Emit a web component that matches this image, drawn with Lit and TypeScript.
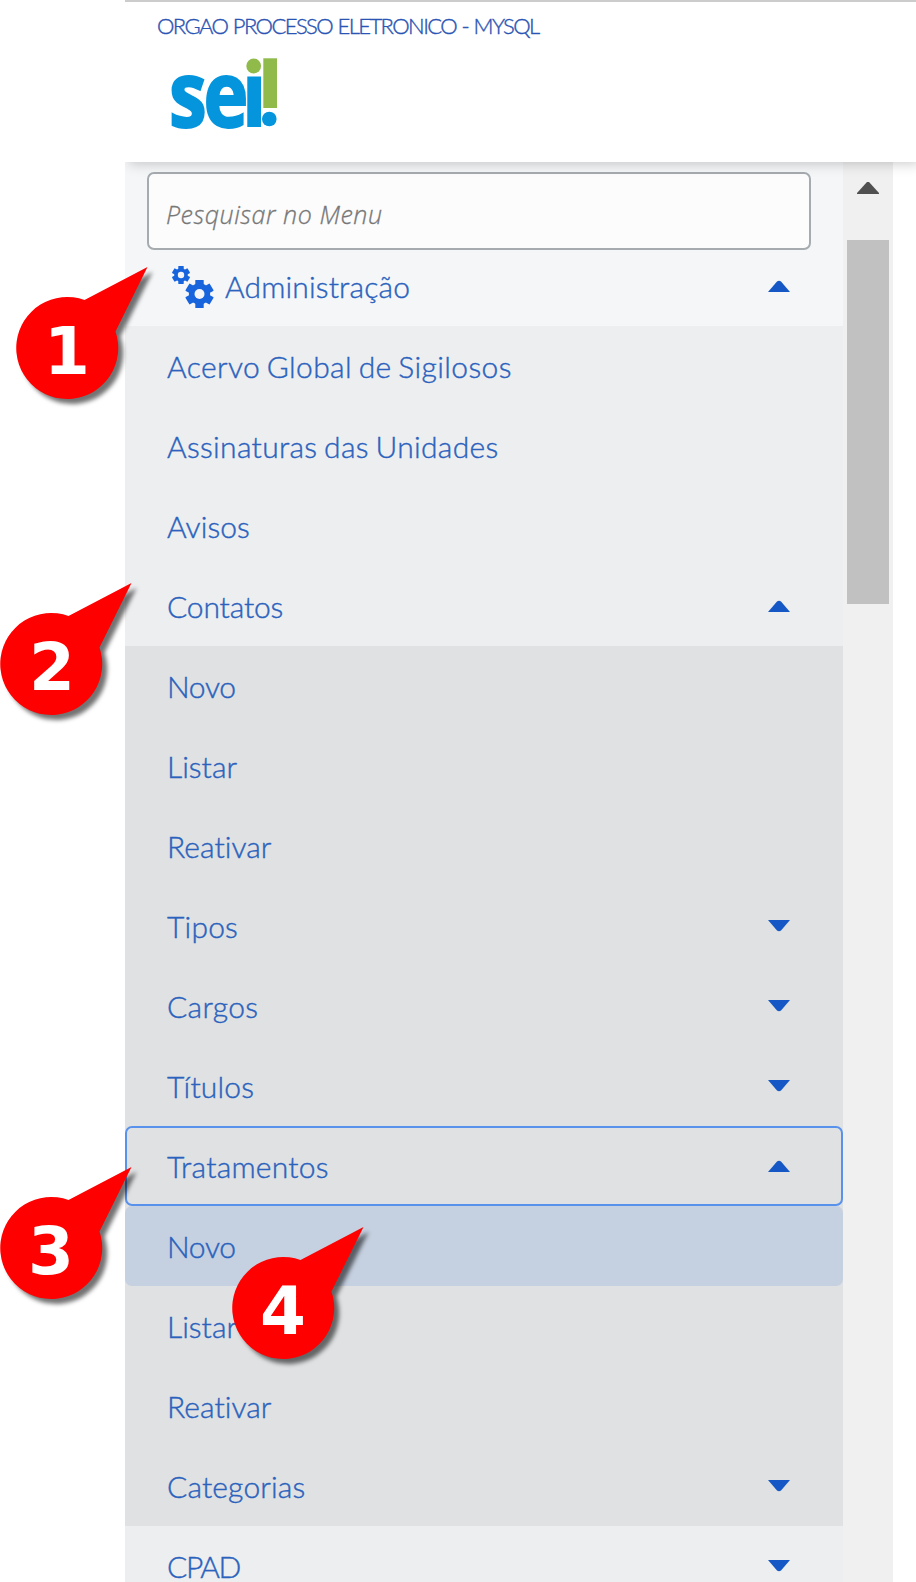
import { LitElement, html, svg, css, nothing } from "lit";
import { customElement } from "lit/decorators.js";
import { classMap } from "lit/directives/class-map.js";

type Arrow = "up" | "down";
interface Item {
  label: string;
  spacing: number;
  arrow?: Arrow;
  state?: "focused" | "selected";
}

const firstLevel: Item[] = [
  { label: "Acervo Global de Sigilosos", spacing: 0.38 },
  { label: "Assinaturas das Unidades", spacing: 0.31 },
  { label: "Avisos", spacing: 0.05 },
  { label: "Contatos", spacing: -0.15, arrow: "up" },
];

const secondLevel: Item[] = [
  { label: "Novo", spacing: -0.3 },
  { label: "Listar", spacing: 0 },
  { label: "Reativar", spacing: 0.05 },
  { label: "Tipos", spacing: 0.2, arrow: "down" },
  { label: "Cargos", spacing: 0.3, arrow: "down" },
  { label: "Títulos", spacing: 0.2, arrow: "down" },
  { label: "Tratamentos", spacing: 0.25, arrow: "up", state: "focused" },
  { label: "Novo", spacing: -0.3, state: "selected" },
  { label: "Listar", spacing: 0 },
  { label: "Reativar", spacing: 0.05 },
  { label: "Categorias", spacing: 0.15, arrow: "down" },
];

const callouts = [
  { digit: "1", left: 16, top: 267 },
  { digit: "2", left: 0, top: 583 },
  { digit: "3", left: 0, top: 1167 },
  { digit: "4", left: 232, top: 1227 },
];

const gear = (cx: number, cy: number, r: number, hole: number) => svg`
  <g transform="translate(${cx} ${cy})" fill="#1764dd">
    <circle r=${r * 0.76}></circle>
    ${[0, 60, 120, 180, 240, 300].map(
      (a) => svg`<rect x=${-r * 0.3} y=${-r} width=${r * 0.6} height=${r * 0.5} rx="0.6" transform="rotate(${a})"></rect>`
    )}
    <circle r=${hole} fill="#f3f5f8"></circle>
  </g>`;

@customElement("app-root")
export class AppRoot extends LitElement {
  static styles = css`
    :host {
      display: block;
      position: relative;
      width: 916px;
      height: 1582px;
      overflow: hidden;
      background: #fff;
      color: #2a62bd;
      font-family: Lato, "Open Sans", sans-serif;
    }
    .page {
      margin-left: 125px;
      display: flex;
      flex-direction: column;
      height: 100%;
    }
    header {
      box-sizing: border-box;
      flex: none;
      height: 162px;
      border-top: 2px solid #ccc;
      background: #fff;
      padding: 11px 0 0 32px;
      box-shadow: 4px 2px 12px rgba(0, 0, 0, 0.2);
      position: relative;
      clip-path: inset(0 0 -20px 0);
      z-index: 1;
    }
    .org {
      font-size: 22px;
      font-weight: 300;
      line-height: 26px;
      letter-spacing: -1.58px;
      word-spacing: 1px;
      white-space: nowrap;
      color: #2a55b4;
      -webkit-text-stroke: 0.4px #2a55b4;
    }
    .logo {
      display: block;
      overflow: visible;
      margin: 15px 0 0 10px;
    }
    .body {
      display: flex;
      flex: 1;
      min-height: 0;
    }
    nav {
      width: 718px;
      background: #f4f6f8;
    }
    .search {
      box-sizing: border-box;
      display: block;
      width: 664px;
      height: 78px;
      margin: 10px 0 0 22px;
      padding: 6px 17px 0;
      border: 2px solid #a6abb0;
      border-radius: 7px;
      background: #fcfcfc;
      font: italic 300 25px "Open Sans", sans-serif;
      letter-spacing: 0.55px;
      outline: none;
    }
    .search::placeholder {
      color: #777;
      opacity: 1;
      -webkit-text-stroke: 0.3px #777;
    }
    .row {
      box-sizing: border-box;
      display: flex;
      align-items: center;
      justify-content: space-between;
      height: 80px;
      padding: 0 52px 0 42px;
      font-size: 30px;
      font-weight: 300;
      line-height: 80px;
      white-space: nowrap;
      word-spacing: -1.8px;
      -webkit-text-stroke: 0.4px #2a62bd;
    }
    .admin {
      height: 76px;
      padding-bottom: 4px;
      justify-content: flex-start;
    }
    .admin .gears {
      margin: 0 11px 0 3px;
    }
    .admin .arrow {
      margin-left: auto;
    }
    .level1 {
      background: #edeef0;
    }
    .level2 {
      background: #dfe1e2;
    }
    .focused {
      border: 2px solid #5992ed;
      border-radius: 7px;
      padding: 0 50px 0 40px;
    }
    .selected {
      background: #c5d0e0;
      border-radius: 7px;
    }
    .arrow {
      flex: none;
      fill: #1557c5;
    }
    .scroll {
      width: 50px;
      background: #f0f0f0;
      display: flex;
      flex-direction: column;
      align-items: center;
    }
    .scroll svg {
      margin-top: 20px;
      fill: #505050;
    }
    .thumb {
      width: 42px;
      height: 364px;
      margin-top: 46px;
      background: #c1c1c1;
    }
    .callout {
      position: absolute;
      z-index: 2;
      overflow: visible;
      filter: drop-shadow(5px 5px 2px rgba(0, 0, 0, 0.55));
    }
    .callout text {
      font: bold 66px "DejaVu Sans", sans-serif;
    }
    .logo text {
      font: 700 92px "Open Sans", sans-serif;
      letter-spacing: -4px;
    }
  `;

  private arrow(dir: Arrow) {
    return html`<svg class="arrow" width="24" height="12" viewBox="0 0 24 12">
      <path d=${dir === "up" ? "M1 12L10 1.6Q12 0 14 1.6L23 12Z" : "M1 0L10 10.4Q12 12 14 10.4L23 0Z"}></path>
    </svg>`;
  }

  private row(item: Item) {
    return html`<div
      class=${classMap({ row: true, focused: item.state === "focused", selected: item.state === "selected" })}
    >
      <span style="letter-spacing:${item.spacing}px">${item.label}</span>
      ${item.arrow ? this.arrow(item.arrow) : nothing}
    </div>`;
  }

  render() {
    return html`
      <div class="page">
        <header>
          <div class="org">ORGAO PROCESSO ELETRONICO - MYSQL</div>
          <svg class="logo" width="114" height="80" viewBox="0 0 114 80">
            <g fill="#0495dd">
              <text x="2" y="73" textLength="76" lengthAdjust="spacingAndGlyphs" stroke="#0495dd" stroke-width="2">se</text>
              <rect x="80.3" y="22.5" width="13.7" height="50.5"></rect>
              <circle cx="102.3" cy="65" r="7.3"></circle>
            </g>
            <g fill="#90bb4b">
              <circle cx="86.7" cy="12" r="7.4"></circle>
              <rect x="96.3" y="4.3" width="13.7" height="49.7"></rect>
            </g>
          </svg>
        </header>
        <div class="body">
          <nav>
            <input class="search" placeholder="Pesquisar no Menu" />
            <div class="row admin">
              <svg class="gears" width="44" height="44" viewBox="169 264 44 44">
                ${gear(180, 275, 9, 3.2)}${gear(198.5, 294, 14, 5)}
              </svg>
              <span style="letter-spacing:0.15px">Administração</span>
              ${this.arrow("up")}
            </div>
            <div class="level1">${firstLevel.map((i) => this.row(i))}</div>
            <div class="level2">${secondLevel.map((i) => this.row(i))}</div>
            <div class="level1">${this.row({ label: "CPAD", spacing: -1.4, arrow: "down" })}</div>
          </nav>
          <div class="scroll">
            <svg width="22" height="12" viewBox="0 0 22 12"><path d="M0 12V11L10 0H12L22 11V12Z"></path></svg>
            <div class="thumb"></div>
          </div>
        </div>
      </div>
      ${callouts.map(
        (c) => html`<svg
          class="callout"
          style="left:${c.left}px;top:${c.top}px"
          width="132"
          height="132"
          viewBox="0 0 132 132"
        >
          <path d="M68.5 33L131.5 0L99.5 64.5A51 51 0 1 1 68.5 33Z" fill="#f00"></path>
          <text x=${c.digit === "2" ? 52 : 51} y="106.5" text-anchor="middle" fill="#fff">${c.digit}</text>
        </svg>`
      )}
    `;
  }
}
